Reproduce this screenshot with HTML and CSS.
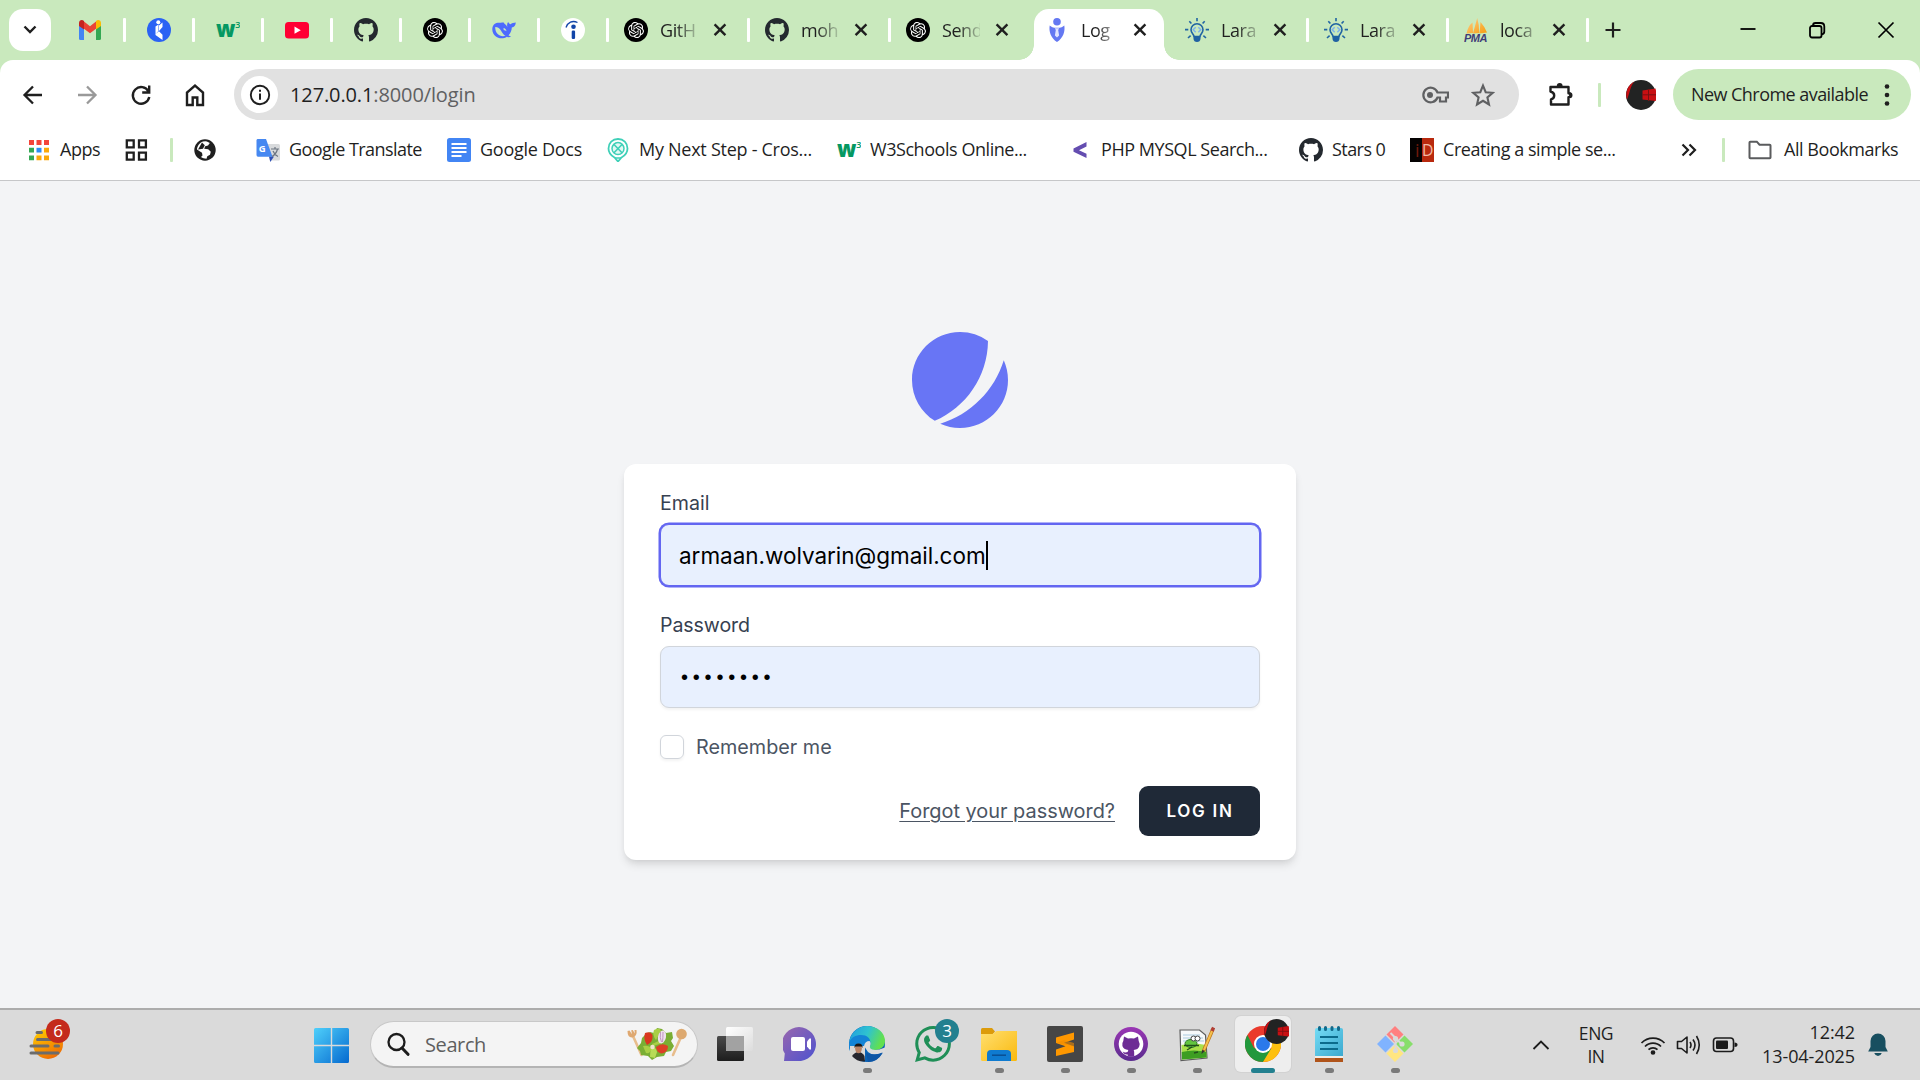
FILE: index.html
```html
<!DOCTYPE html>
<html lang="en">
<head>
<meta charset="utf-8">
<title>Log in</title>
<link rel="stylesheet" href="styles.css">
</head>
<body>
<svg class="defs" aria-hidden="true">
  <defs>
    <symbol id="github" viewBox="0 0 16 16"><path fill-rule="evenodd" d="M8 0C3.58 0 0 3.58 0 8c0 3.54 2.29 6.53 5.47 7.59.4.07.55-.17.55-.38 0-.19-.01-.82-.01-1.49-2.01.37-2.53-.49-2.69-.94-.09-.23-.48-.94-.82-1.13-.28-.15-.68-.52-.01-.53.63-.01 1.08.58 1.23.82.72 1.21 1.87.87 2.33.66.07-.52.28-.87.51-1.07-1.78-.2-3.64-.89-3.64-3.95 0-.87.31-1.59.82-2.15-.08-.2-.36-1.02.08-2.12 0 0 .67-.21 2.2.82.64-.18 1.32-.27 2-.27s1.36.09 2 .27c1.53-1.04 2.2-.82 2.2-.82.44 1.1.16 1.92.08 2.12.51.56.82 1.27.82 2.15 0 3.07-1.87 3.75-3.65 3.95.29.25.54.73.54 1.48 0 1.07-.01 1.93-.01 2.2 0 .21.15.46.55.38A8.01 8.01 0 0016 8c0-4.42-3.58-8-8-8z"/></symbol>
    <symbol id="openai" viewBox="0 0 24 24"><circle cx="12" cy="12" r="12" fill="#000"/><path transform="translate(4 4) scale(.667)" fill="#fff" d="M22.2819 9.8211a5.9847 5.9847 0 0 0-.5157-4.9108 6.0462 6.0462 0 0 0-6.5098-2.9A6.0651 6.0651 0 0 0 4.9807 4.1818a5.9847 5.9847 0 0 0-3.9977 2.9 6.0462 6.0462 0 0 0 .7427 7.0966 5.98 5.98 0 0 0 .511 4.9107 6.051 6.051 0 0 0 6.5146 2.9001A5.9847 5.9847 0 0 0 13.2599 24a6.0557 6.0557 0 0 0 5.7718-4.2058 5.9894 5.9894 0 0 0 3.9977-2.9001 6.0557 6.0557 0 0 0-.7475-7.0729zm-9.022 12.6081a4.4755 4.4755 0 0 1-2.8764-1.0408l.1419-.0804 4.7783-2.7582a.7948.7948 0 0 0 .3927-.6813v-6.7369l2.02 1.1686a.071.071 0 0 1 .038.052v5.5826a4.504 4.504 0 0 1-4.4945 4.4944zm-9.6607-4.1254a4.4708 4.4708 0 0 1-.5346-3.0137l.142.0852 4.783 2.7582a.7712.7712 0 0 0 .7806 0l5.8428-3.3685v2.3324a.0804.0804 0 0 1-.0332.0615L9.74 19.9502a4.4992 4.4992 0 0 1-6.1408-1.6464zM2.3408 7.8956a4.485 4.485 0 0 1 2.3655-1.9728V11.6a.7664.7664 0 0 0 .3879.6765l5.8144 3.3543-2.0201 1.1685a.0757.0757 0 0 1-.071 0l-4.8303-2.7865A4.504 4.504 0 0 1 2.3408 7.872zm16.5963 3.8558L13.1038 8.364 15.1192 7.2a.0757.0757 0 0 1 .071 0l4.8303 2.7913a4.4944 4.4944 0 0 1-.6765 8.1042v-5.6772a.79.79 0 0 0-.407-.667zm2.0107-3.0231l-.142-.0852-4.7735-2.7818a.7759.7759 0 0 0-.7854 0L9.409 9.2297V6.8974a.0662.0662 0 0 1 .0284-.0615l4.8303-2.7866a4.4992 4.4992 0 0 1 6.6802 4.66zM8.3065 12.863l-2.02-1.1638a.0804.0804 0 0 1-.038-.0567V6.0742a4.4992 4.4992 0 0 1 7.3757-3.4537l-.142.0805L8.704 5.459a.7948.7948 0 0 0-.3927.6813zm1.0976-2.3654l2.602-1.4998 2.6069 1.4998v2.9994l-2.5974 1.4997-2.6067-1.4997Z"/></symbol>
    <symbol id="w3" viewBox="0 0 24 24"><text x="0" y="18.500" font-family="Open Sans" font-weight="800" font-size="23" textLength="19" lengthAdjust="spacingAndGlyphs" fill="#059862">w</text><text x="19.300" y="9.800" font-family="Open Sans" font-weight="600" font-size="9" fill="#059862">3</text></symbol>
    <symbol id="close" viewBox="0 0 18 18"><path d="M3.600 3.300l10.800 10.800M14.400 3.300L3.600 14.100" stroke="#1f1f1f" stroke-width="2.400" fill="none"/></symbol>
    <symbol id="bulb" viewBox="0 0 24 24"><g fill="none" stroke="#2064a3" stroke-width="1.600"><path d="M9 18.500c0-2-3-3.300-3-6.700a6 6 0 0 1 12 0c0 3.400-3 4.700-3 6.700z"/><path d="M12 0v3.200M4.300 3.200l2.100 2.300M19.700 3.200l-2.100 2.300M0 11.600h3.300M20.700 11.600H24M3 20l2.600-2.300M21 20l-2.600-2.300"/></g><path d="M8.500 18.500h7v2.200c0 2-1.500 3.300-3.500 3.300s-3.500-1.300-3.500-3.300z" fill="#1f61a2"/><path d="M10.700 9.300l-2.500 2.500 2.500 2.500M13.300 9.300l2.500 2.500-2.500 2.500" fill="none" stroke="#7fb3ea" stroke-width="1.500"/></symbol>
    <symbol id="profile" viewBox="0 0 30 30"><circle cx="15" cy="15" r="15" fill="#222323"/><path d="M1 19.500A15 15 0 0 1 8.500 1.500C4 6 4 13 1 19.500z" fill="#c80d12"/><path d="M16.500 10.500l13-2q1.500 6 .3 12.500l-13.300-1.500z" fill="#c80f12"/><path d="M22.500 9v12M16.500 14.800H30" stroke="#7a0f12" stroke-width="1"/></symbol>
    <linearGradient id="win" x1="0" y1="0" x2="1" y2="1"><stop offset="0" stop-color="#4fd0fb"/><stop offset="1" stop-color="#0569cf"/></linearGradient>
    <linearGradient id="sun" x1=".2" y1="0" x2=".7" y2="1"><stop offset="0" stop-color="#ffcb00"/><stop offset="1" stop-color="#ee6a05"/></linearGradient>
    <linearGradient id="chat" x1="0" y1="0" x2="1" y2="1"><stop offset="0" stop-color="#9a67ad"/><stop offset="1" stop-color="#4d52cf"/></linearGradient>
    <linearGradient id="edge" x1="0" y1="0" x2="1" y2=".3"><stop offset="0" stop-color="#1f9be0"/><stop offset=".55" stop-color="#2fc3d0"/><stop offset="1" stop-color="#62e04f"/></linearGradient>
    <linearGradient id="folder" x1="0" y1="0" x2="1" y2="1"><stop offset="0" stop-color="#ffdf70"/><stop offset="1" stop-color="#fab90d"/></linearGradient>
    <linearGradient id="cat" x1="0" y1="0" x2="0" y2="1"><stop offset="0" stop-color="#9a36b4"/><stop offset="1" stop-color="#5a2c8e"/></linearGradient>
    <linearGradient id="note" x1="0" y1="0" x2="1" y2="1"><stop offset="0" stop-color="#74dcf5"/><stop offset="1" stop-color="#3ca9cf"/></linearGradient>
    <linearGradient id="pane" x1="0" y1="0" x2="0" y2="1"><stop offset="0" stop-color="#4a4a4a"/><stop offset="1" stop-color="#1d1d1d"/></linearGradient>
    <linearGradient id="glass" x1="0" y1="0" x2="1" y2="1"><stop offset="0" stop-color="#fff"/><stop offset="1" stop-color="#dcdcdc"/></linearGradient>
    <linearGradient id="sail" x1="0" y1="0" x2="1" y2="1"><stop offset="0" stop-color="#fdd08a"/><stop offset="1" stop-color="#f89c0e"/></linearGradient>
  </defs>
</svg>

<header class="tabstrip">
  <button class="tab-search"><svg width="14" height="10" viewBox="0 0 14 10"><path d="M1.500 1.500L7 7l5.500-5.500" fill="none" stroke="#1f1f1f" stroke-width="2.400"/></svg></button>
  <div class="pinned"><svg class="fav" viewBox="0 0 24 24"><path d="M1 5v15.500q0 1.500 1.500 1.500H6V9.500z" fill="#4285f4"/><path d="M23 5v15.500q0 1.500-1.500 1.500H18V9.500z" fill="#34a853"/><path d="M6 3.500l6 4.700 6-4.700v7.200l-6 4.600-6-4.600z" fill="#ea4335"/><path d="M1 8V5c0-3 3.200-3.700 5-2v8.500z" fill="#c5221f"/><path d="M23 8V5c0-3-3.200-3.700-5-2v8.500z" fill="#fbbc04"/></svg><i class="sep"></i></div>
  <div class="pinned"><svg class="fav" viewBox="0 0 24 24"><circle cx="12" cy="12" r="12" fill="#2a62f4"/><circle cx="11.300" cy="4.300" r="2" fill="#fff"/><path d="M8.500 8.500v7.500l3-3V6.500zM12 7.500l3.500-3v4.500l-3.500 4zM8.500 16l3.500-2.800 3.500 3.500V22l-7-5z" fill="#fff"/></svg><i class="sep"></i></div>
  <div class="pinned"><svg class="fav"><use href="#w3"/></svg><i class="sep"></i></div>
  <div class="pinned"><svg class="fav" viewBox="0 0 24 24"><rect y="4" width="24" height="16.500" rx="3.500" fill="#ff0033"/><path d="M9.500 8.500v7.300l6.300-3.600z" fill="#fff"/></svg><i class="sep"></i></div>
  <div class="pinned"><svg class="fav ink"><use href="#github"/></svg><i class="sep"></i></div>
  <div class="pinned"><svg class="fav"><use href="#openai"/></svg><i class="sep"></i></div>
  <div class="pinned"><svg class="fav" viewBox="0 0 24 24"><path d="M10 4.500c1.500-.3 2.500.2 2.400 1.300 1.600 1 2.300 2 3 3.400-.6-1.800-.4-3.500.7-5.200.8 1.400 1.500 2 2.700 2.200 1.300-1.500 3-1.300 5-1.700-.2 3-1.600 4.700-4 5-.1 3.200-1.300 5.800-3.300 7.800.7.700 1.500 1 2.600 1.100-1.300 1-2.700 1.100-4.200.3C9.500 22.500.5 19.500.3 11.500.3 7.500 2.500 5 5.500 4.700c1.600-.1 3 .1 4.500-.2z" fill="#4d6bfe"/><path d="M3.200 9c3 0 4.500 1.500 6 4 1.300 2.200 2.300 3.800 4.300 4.800C8.500 19.500 3 16 3.200 9zM11.500 10c1.500.2 2.800 1.400 3 3.200-.8-.8-2-.7-2.800-1.300z" fill="#c9e9bd"/></svg><i class="sep"></i></div>
  <div class="pinned"><svg class="fav" viewBox="0 0 24 24"><circle cx="12" cy="12" r="12" fill="#fff"/><circle cx="12.500" cy="8.700" r="2.300" fill="#1245a8"/><rect x="10.700" y="12.500" width="3.400" height="8.500" rx="1.200" fill="#1245a8"/><path d="M5 9.500C6.500 4.500 11.500 2 16.500 4.500" fill="none" stroke="#1245a8" stroke-width="1.300"/></svg><i class="sep"></i></div>

  <div class="tab"><svg class="fav"><use href="#openai"/></svg><span class="title">GitH</span><svg class="x"><use href="#close"/></svg><i class="sep"></i></div>
  <div class="tab"><svg class="fav ink"><use href="#github"/></svg><span class="title">moh</span><svg class="x"><use href="#close"/></svg><i class="sep"></i></div>
  <div class="tab before-active"><svg class="fav"><use href="#openai"/></svg><span class="title">Send</span><svg class="x"><use href="#close"/></svg></div>
  <div class="tab active"><svg class="fav" viewBox="0 0 24 24"><circle cx="12" cy="3.800" r="3.800" fill="#6478f2"/><path d="M4.700 7.500c2 1.500 3.500 2.200 4.500 2.300h5.600c1-.1 2.500-.8 4.500-2.300 1 6-1 12.500-7.300 16.500C5.700 20 3.700 13.500 4.700 7.500z" fill="#6478f2"/><path d="M9.800 10.300h4.400l-1 1.700.9 5.500-2.100 2-2.100-2 .9-5.500z" fill="#dfe3ff"/></svg><span class="title">Log</span><svg class="x"><use href="#close"/></svg></div>
  <div class="tab after-active"><svg class="fav"><use href="#bulb"/></svg><span class="title">Lara</span><svg class="x"><use href="#close"/></svg><i class="sep"></i></div>
  <div class="tab narrow"><svg class="fav"><use href="#bulb"/></svg><span class="title">Lara</span><svg class="x"><use href="#close"/></svg><i class="sep"></i></div>
  <div class="tab narrow"><svg class="fav" viewBox="0 0 24 24"><path d="M2.500 15.500Q4 8 8.500 4.500L9 15zM9 15.500L13.200 0q2.200 7 2 15zM15.500 15.500L16.500 4q4.500 5 6.500 10.500z" fill="url(#sail)"/><text x="0" y="23.500" font-family="Liberation Sans" font-weight="700" font-style="italic" font-size="10" textLength="23" lengthAdjust="spacingAndGlyphs" fill="#3f3d77">PMA</text></svg><span class="title">loca</span><svg class="x"><use href="#close"/></svg><i class="sep"></i></div>
  <button class="new-tab"><svg width="18" height="18" viewBox="0 0 18 18"><path d="M9 1.500v15M1.500 9h15" stroke="#1f1f1f" stroke-width="2.200"/></svg></button>
  <div class="window-controls">
    <span><svg width="18" height="18" viewBox="0 0 18 18"><path d="M1.500 8h15" stroke="#000" stroke-width="1.800"/></svg></span>
    <span><svg width="18" height="18" viewBox="0 0 18 18" fill="none" stroke="#000" stroke-width="1.800"><rect x="2" y="5" width="11.500" height="11.500" rx="2"/><path d="M5 4.500C5 2.800 6 2 7.500 2h5.300C15 2 16.300 3.300 16.300 5.500v5c0 1.500-.8 2.600-2.300 2.800"/></svg></span>
    <span><svg width="18" height="18" viewBox="0 0 18 18"><path d="M1.500 1.500l15 15M16.500 1.500l-15 15" stroke="#000" stroke-width="1.700"/></svg></span>
  </div>
</header>

<section class="chrome">
  <nav class="toolbar">
    <span class="nav"><svg width="24" height="24" viewBox="0 0 24 24" fill="none" stroke="#1f1f1f" stroke-width="2.300"><path d="M21 12H4M12 3.500L3.500 12l8.500 8.500"/></svg></span>
    <span class="nav"><svg width="24" height="24" viewBox="0 0 24 24" fill="none" stroke="#999" stroke-width="2.300"><path d="M3 12h17M12 3.500l8.500 8.500-8.500 8.500"/></svg></span>
    <span class="nav"><svg width="24" height="24" viewBox="0 0 24 24" fill="none" stroke="#1f1f1f" stroke-width="2.400"><path d="M19.500 8.500A8.300 8.300 0 1 0 20.300 14M20.200 2.500v7h-7"/></svg></span>
    <span class="nav"><svg width="24" height="24" viewBox="0 0 24 24" fill="none" stroke="#1f1f1f" stroke-width="2.400"><path d="M4 22V9.500L12 2.500l8 7V22h-5.700v-7.500H9.700V22z"/></svg></span>
    <div class="omnibox">
      <span class="site-info"><svg width="22" height="22" viewBox="0 0 22 22"><circle cx="11" cy="11" r="9.200" fill="none" stroke="#1f1f1f" stroke-width="1.900"/><path d="M11 9.500v6.300M11 5.800v2" stroke="#1f1f1f" stroke-width="2"/></svg></span>
      <span class="url">127.0.0.1<em>:8000/login</em></span>
      <svg class="key" width="28" height="18" viewBox="0 0 28 18"><path d="M16.500 6.500A7.300 7.300 0 1 0 16.500 11.500H19v4h6v-4h2v-5z" fill="none" stroke="#5f6062" stroke-width="2.200"/><circle cx="9" cy="9" r="3" fill="#5f6062"/></svg>
      <svg class="star" width="24" height="24" viewBox="0 0 24 24"><path d="M12 2.600l2.700 6.600 7.100.6-5.400 4.700 1.600 7L12 17.800l-6 3.700 1.600-7-5.400-4.700 7.100-.6z" fill="none" stroke="#5f6062" stroke-width="2.100"/></svg>
    </div>
    <svg class="puzzle" width="26" height="26" viewBox="0 0 26 26"><path d="M2.500 6h18v6.200a2 2 0 0 1 0 4V23.500H3v-5q3.200-1 3.200-4t-3.700-4z" fill="none" stroke="#1f1f1f" stroke-width="2.400" stroke-linejoin="round"/><path d="M8.800 5a2.900 2.900 0 0 1 5.800 0zM21.500 11.200a3 3 0 0 1 0 6z" fill="#1f1f1f"/></svg>
    <i class="vsep"></i>
    <svg class="avatar"><use href="#profile"/></svg>
    <button class="update"><span>New Chrome available</span><svg width="6" height="22" viewBox="0 0 6 22" fill="#1f1f1f"><circle cx="3" cy="2.500" r="2.300"/><circle cx="3" cy="11" r="2.300"/><circle cx="3" cy="19.500" r="2.300"/></svg></button>
  </nav>
  <nav class="bookmarks">
    <span class="bm"><svg class="fav" viewBox="0 0 24 24"><path d="M2 2h5v5H2zM9.500 2h5v5h-5zM17 2h5v5h-5z" fill="#f4453a"/><path d="M2 9.800h5v4.700H2zM2 17.500h5v4.700H2z" fill="#34a853"/><path d="M9.500 9.800h5v4.700h-5z" fill="#2b8df5"/><path d="M17 9.800h5v4.700h-5zM9.500 17.500h5v4.700h-5zM17 17.500h5v4.700h-5z" fill="#fba90a"/></svg><span>Apps</span></span>
    <span class="bm"><svg class="fav" viewBox="0 0 24 24" fill="none" stroke="#1f1f1f" stroke-width="2.300"><path d="M2.800 2.400h6.900v6.900H2.800zM15 2.400h6.900v6.900H15zM2.800 14.700h6.900v6.900H2.800zM15 14.700h6.900v6.900H15z"/></svg></span>
    <i class="vsep"></i>
    <span class="bm"><svg class="fav" viewBox="0 0 24 24"><circle cx="12" cy="12" r="10.700" fill="#1f1f1f"/><path d="M12.500 3.200c2 .3 3 .8 4.300 1.800L15 7.500l-2.800.8-1 2.500 4 .5 2.600 2.500-.8 3-2.700 1.500-.8 2.400c-2 0-4-.5-5.500-1.700l1.500-1.500-.5-2.700L4 11.500c0-3 2.500-7 6-8z" fill="#fff"/><path d="M9 4.500l2.800 2.800-1.800 3.500-5 .7z" fill="#1f1f1f"/></svg></span>
    <span class="bm"><svg class="fav" viewBox="0 0 24 24"><path d="M11 6h11.500q1.500 0 1.500 1.500V21q0 1.500-1.500 1.500H14z" fill="#d8dadc"/><path d="M13 18.500h5L14.300 24z" fill="#2f50b5"/><path d="M1.500 1H10l6.500 17.700H2Q.5 18.700.5 17V2.500Q.5 1 1.500 1z" fill="#4688f1"/><text x="2.700" y="13.500" font-family="Open Sans" font-weight="700" font-size="9.500" fill="#fff">G</text><path d="M15 11h8M19 9v2M21.500 11c-.7 3-3 6-5.500 7.500M17 13c1 2.500 3 4.500 5 5.500" stroke="#6b7480" stroke-width="1.200" fill="none"/></svg><span class="tight">Google Translate</span></span>
    <span class="bm"><svg class="fav" viewBox="0 0 24 24"><rect width="24" height="24" rx="2.500" fill="#4285f4"/><path d="M4.500 6h15M4.500 10h15M4.500 14h15M4.500 18h10" stroke="#fff" stroke-width="2"/></svg><span class="loose">Google Docs</span></span>
    <span class="bm"><svg class="fav" viewBox="0 0 24 24"><path d="M12 1c5.500 0 9.500 4 9.500 9.500 0 4.500-3 7.300-6 9L12 23.500l-3.500-4c-3-1.700-6-4.500-6-9C2.500 5 6.500 1 12 1z" fill="none" stroke="#3fd0b8" stroke-width="1.800"/><circle cx="12" cy="10.600" r="6" fill="#e3f8f4" stroke="#3fd0b8" stroke-width="1.500"/><path d="M8 6.500l8 8.200M16 6.500l-8 8.200M9 20h6" stroke="#3fd0b8" stroke-width="1.600"/></svg><span class="loose">My Next Step - Cros...</span></span>
    <span class="bm"><svg class="fav"><use href="#w3"/></svg><span>W3Schools Online...</span></span>
    <span class="bm"><svg class="fav" viewBox="0 0 24 24"><path d="M18.500 4v4.500L11 12.200l7.500 3.500V20L5.500 13.800v-3.200z" fill="#644db0"/></svg><span>PHP MYSQL Search...</span></span>
    <span class="bm"><svg class="fav ink"><use href="#github"/></svg><span class="tight">Stars 0</span></span>
    <span class="bm"><svg class="fav" viewBox="0 0 24 24"><path d="M0 0h12v24H0z" fill="#050202"/><path d="M12 0h12v24H12z" fill="#b8290e"/><text x="5" y="19" font-family="Open Sans" font-size="18" fill="#6e1a0c">i</text><text x="12" y="18" font-family="Open Sans" font-size="16" textLength="11" lengthAdjust="spacingAndGlyphs" fill="#f0b9a5">D</text></svg><span>Creating a simple se...</span></span>
    <span class="bm"><svg class="fav" viewBox="0 0 24 24"><path d="M5.500 6.500L11 12l-5.500 5.500M12.500 6.500L18 12l-5.500 5.500" fill="none" stroke="#1f1f1f" stroke-width="2.200"/></svg></span>
    <i class="vsep"></i>
    <span class="bm folder"><svg class="fav" viewBox="0 0 24 24"><path d="M1.500 4.500q0-.8.800-.8h6.500l2.700 3h10.200q.8 0 .8.800v12q0 .8-.8.800H2.300q-.8 0-.8-.8z" fill="none" stroke="#5a5b5d" stroke-width="2"/></svg><span>All Bookmarks</span></span>
  </nav>
</section>

<main class="page">
  <svg class="logo" viewBox="0 0 48 48" fill="#6875f5"><path d="M11.395 44.428C4.557 40.198 0 32.632 0 24 0 10.745 10.745 0 24 0a23.891 23.891 0 0113.997 4.502c-.2 17.907-11.097 33.245-26.602 39.926z"/><path d="M14.134 45.885A23.914 23.914 0 0024 48c13.255 0 24-10.745 24-24 0-3.516-.756-6.856-2.115-9.866-4.659 15.143-16.608 27.092-31.75 31.751z"/></svg>
  <form class="card">
    <label class="label">Email</label>
    <div class="field focused"><span class="value">armaan.wolvarin@gmail.com</span><i class="caret"></i></div>
    <label class="label second">Password</label>
    <div class="field"><span class="dots">••••••••</span></div>
    <div class="remember"><i class="checkbox"></i><span>Remember me</span></div>
    <div class="actions"><a class="forgot">Forgot your password?</a><button type="button" class="login">LOG IN</button></div>
  </form>
</main>

<footer class="taskbar">
  <div class="widget"><svg width="38" height="34" viewBox="0 0 38 34"><circle cx="19" cy="16" r="15" fill="url(#sun)"/><path d="M8 4.500h4.500M8.500 11.500h26M2 18h17M26 18h3.500M2 25h27" stroke="#6c6c6c" stroke-width="3" stroke-linecap="round"/></svg><b class="badge red">6</b></div>
  <svg class="start" viewBox="0 0 35 35" fill="url(#win)"><path d="M0 1.500Q0 0 1.500 0H16.800V16.800H0zM18.200 0H33.500Q35 0 35 1.500V16.800H18.200zM0 18.200H16.800V35H1.500Q0 35 0 33.500zM18.200 18.200H35V33.500Q35 35 33.500 35H18.200z"/></svg>
  <div class="search"><svg width="24" height="24" viewBox="0 0 24 24"><circle cx="10.500" cy="10" r="8" fill="none" stroke="#1c1c1c" stroke-width="2.300"/><path d="M16 16l6 6.300" stroke="#1c1c1c" stroke-width="3" stroke-linecap="round"/></svg><span>Search</span>
    <svg class="salad" width="62" height="34" viewBox="0 0 62 34"><path d="M7 9l8.500 19" stroke="#e8bd8c" stroke-width="2.600" stroke-linecap="round"/><path d="M1.500 4q0 7 5 6.500 5-1.500 4-7.500L8.500 3l.3 3.500-2-3.500-1.600.3.800 4L3.500 3.500z" fill="#dfa870"/><path d="M55 10l-8 18" stroke="#e8bd8c" stroke-width="2.600" stroke-linecap="round"/><circle cx="55.500" cy="7" r="5.300" fill="#dda970"/><path d="M20 7l4-2 4 1 3-5 5 1 4 4 6-1 1 6-2 3 3 5-3 5-5 1-2 4-7 1-5 3-4-4-7-1-1-4-3-3 4-5 1-5z" fill="#7aae34"/><path d="M19 6q6-2 7.500 2 1 7-5.500 10-4-6-2-12z" fill="#d9371f"/><path d="M30 20q6-5 12-1 0 7-6.500 7.500-5-1-5.500-6.500z" fill="#dd3f26"/><path d="M28 3q6-3 7 1l-5 9q-4-5-2-10zM17 19q6-1 9 3-2 5-6 4zM26 17l9-4 3 2.500-11 3.500z" fill="#a9cf45"/><ellipse cx="36" cy="10" rx="4" ry="6.500" fill="#efe0ee" transform="rotate(12 36 10)"/><path d="M34.500 5q-1 6 1 10M37 5q0 6-.5 10" stroke="#b582b4" stroke-width=".8" fill="none"/><path d="M26 20q4 0 5 5l-2 6-5-1q0-6 2-10z" fill="#b7dc57"/><circle cx="26.500" cy="20" r="2.300" fill="#f1e6cf"/></svg></div>
  <div class="apps-row">
    <span class="app"><svg width="36" height="36" viewBox="0 0 36 36"><rect x="0" y="10" width="27" height="25" rx="1.500" fill="url(#pane)"/><rect x="9" y="1" width="27" height="24" rx="1.500" fill="url(#glass)"/><path d="M9 10h18v15H9z" fill="#a2a2a2"/></svg></span>
    <span class="app"><svg width="36" height="36" viewBox="0 0 36 36"><path d="M1 35l.8-7.500A17 17 0 1 1 18 35z" fill="url(#chat)"/><rect x="8" y="11" width="14" height="14" rx="2" fill="#fff"/><path d="M24 15.500l2.500-3h1.500v11h-1.500L24 20.500z" fill="#fff"/></svg></span>
    <span class="app running"><svg width="36" height="36" viewBox="0 0 36 36"><circle cx="18" cy="18" r="18" fill="#0c62b4"/><path d="M0 17C1 7 9 0 18 0c10 0 18 6.500 18 15 0 6-5 9-10 9-5 0-6-2-5-4 1-2 1-9-8-9C7 11 1 14 0 17z" fill="url(#edge)"/><path d="M0 17C2 11 7 9 12 9c8 0 11 6 8.500 10.500C14 17 11 24 15 30L5 31Q-1 25 0 17z" fill="#1484d6"/><path d="M15 20q1-5 5.500-5 2 2 .5 5-1 3.500 5 4 4 0 10-2.500v4.500q-11 5-17 0z" fill="#dcdcdc"/><path d="M17 27q8 3 16.500-.500Q29 36 19 36z" fill="#0d56a6"/><path d="M1 20h15v14H8L1 29z" fill="#dbd8d6"/><path d="M3 30q3-4 6.500-4t6 4l.5 5.500Q8 36 3 30z" fill="#26262e"/><ellipse cx="9.500" cy="22.500" rx="3.400" ry="4.800" fill="#b88366"/><path d="M5.500 22q-.5-4.500 4-4.500t4 4.500l-1-1.500H6.500z" fill="#1c1817"/></svg></span>
    <span class="app"><svg width="36" height="36" viewBox="0 0 24 24" fill="#1f8f57"><path d="M17.472 14.382c-.297-.149-1.758-.867-2.030-.967-.273-.099-.471-.148-.670.150-.197.297-.767.966-.940 1.164-.173.199-.347.223-.644.075-.297-.150-1.255-.463-2.390-1.475-.883-.788-1.480-1.761-1.653-2.059-.173-.297-.018-.458.130-.606.134-.133.298-.347.446-.520.149-.174.198-.298.298-.497.099-.198.050-.371-.025-.520-.075-.149-.669-1.612-.916-2.207-.242-.579-.487-.500-.669-.510-.173-.008-.371-.010-.570-.010-.198 0-.520.074-.792.372-.272.297-1.040 1.016-1.040 2.479 0 1.462 1.065 2.875 1.213 3.074.149.198 2.096 3.200 5.077 4.487.709.306 1.262.489 1.694.625.712.227 1.360.195 1.871.118.571-.085 1.758-.719 2.006-1.413.248-.694.248-1.289.173-1.413-.074-.124-.272-.198-.570-.347m-5.421 7.403h-.004a9.870 9.870 0 0 1-5.031-1.378l-.361-.214-3.741.982.998-3.648-.235-.374a9.860 9.860 0 0 1-1.510-5.260c.001-5.450 4.436-9.884 9.888-9.884 2.640 0 5.122 1.030 6.988 2.898a9.825 9.825 0 0 1 2.893 6.994c-.003 5.450-4.437 9.884-9.885 9.884m8.413-18.297A11.815 11.815 0 0 0 12.050 0C5.495 0 .160 5.335.157 11.892c0 2.096.547 4.142 1.588 5.945L.057 24l6.305-1.654a11.882 11.882 0 0 0 5.683 1.448h.005c6.554 0 11.890-5.335 11.893-11.893a11.821 11.821 0 0 0-3.480-8.413z"/></svg><b class="badge teal">3</b></span>
    <span class="app running"><svg width="36" height="36" viewBox="0 0 36 36"><path d="M0 3.500Q0 2 1.500 2H11l3 3.500L11 9H0z" fill="#dc9b0b"/><path d="M0 8h11.500l4-3H36v28.500q0 1.500-1.500 1.500h-33Q0 35 0 33.500z" fill="url(#folder)"/><path d="M6 35v-7q0-4 4-4h16q4 0 4 4v7z" fill="#0f7bd0"/><path d="M11 29.200h14" stroke="#0a4f92" stroke-width="1.500"/></svg></span>
    <span class="app running"><svg width="36" height="36" viewBox="0 0 36 36"><rect width="36" height="36" rx="2" fill="#464646"/><path d="M27 6.500v7l-10 3.300 10 3.400V26L9 30v-6.500l9.500-3.300L9 17v-5.500z" fill="#ff9800"/><path d="M9 17l18 3.200V17L17 14z" fill="#ee8a00" opacity=".6"/></svg></span>
    <span class="app running"><svg width="36" height="36" viewBox="0 0 36 36"><circle cx="18" cy="18" r="17" fill="url(#cat)"/><circle cx="18" cy="18" r="12.300" fill="#fff"/><path d="M11 10.500l4 2q3-.7 6 0l4-2 .7 4.500q1.500 2.500.5 5.500-1 3-5.500 3.500.5 1 .5 2.500v4h-6.500v-2q-4 .5-5-3 2 1.500 5 .5 0-1.200.7-2-5-.5-6-4-.6-3 .9-5z" fill="#6d2d95"/></svg></span>
    <span class="app running"><svg width="36" height="36" viewBox="0 0 36 36"><path d="M1 4h19.500l6 5L28 32 2 34.500z" fill="#f7f9fa" stroke="#5c5c5c" stroke-width="1.200"/><path d="M4 9h17M4 12h20M4 15h21" stroke="#a9cbe0"/><path d="M2.500 19q12-3 24.300 0l.7 12.500L3 33.500z" fill="#a9e04a"/><path d="M2.800 26q12-3 24.400 0l.5 5.500L3 33.500z" fill="#3d9e22"/><ellipse cx="12" cy="17.500" rx="6" ry="4" fill="#62c540" stroke="#2f7a26" stroke-width="1"/><circle cx="14.500" cy="12.500" r="2.500" fill="#fff" stroke="#444"/><circle cx="18.500" cy="12.500" r="2.500" fill="#fff" stroke="#444"/><path d="M5 19.500h15M8 24l5-3M15 27l4-1" stroke="#234f1b" stroke-width="1.300"/><path d="M34 3L24.500 25" stroke="#b9751d" stroke-width="3.400"/><path d="M33.500 4L25 24" stroke="#f6c04c" stroke-width="2"/><path d="M34.600 1.500L33 5" stroke="#b13e34" stroke-width="3.400"/><path d="M23 24l3 1-3.500 3z" fill="#333"/></svg></span>
    <span class="app running current"><svg width="36" height="36" viewBox="0 0 36 36"><circle cx="18" cy="18" r="18" fill="#ea3a2d"/><path d="M2.400 9A18 18 0 0 0 18 36l9-13-18-1z" fill="#22983c"/><path d="M18 36A18 18 0 0 0 33.600 9H18l8.500 13z" fill="#fdc010"/><circle cx="18" cy="18" r="9" fill="#fff"/><circle cx="18" cy="18" r="7" fill="#2a79ea"/></svg><svg class="overlay"><use href="#profile"/></svg></span>
    <span class="app running"><svg width="36" height="36" viewBox="0 0 36 36"><path d="M4 31h28v5H4z" fill="#b0541a"/><path d="M4 28h28v4H4z" fill="#f2ede6"/><path d="M4 4q0-2 2-2h24q2 0 2 2v26H4z" fill="url(#note)"/><path d="M9 11h18M9 17h18M9 23h18" stroke="#0b6b8c" stroke-width="1.800"/><path d="M8.500 1.500v2M14.500 1.500v2M21 1.500v2M27.500 1.500v2" stroke="#12698a" stroke-width="3" stroke-linecap="round"/></svg></span>
    <span class="app running"><svg width="36" height="36" viewBox="0 0 36 36"><path d="M18 0l8.500 8.500L18 17 9.500 8.500z" fill="#ff8080"/><path d="M8.500 9.500L17 18l-8.500 8.500L0 18z" fill="#80b3ff"/><path d="M27.500 9.500L36 18l-8.500 8.500L19 18z" fill="#87de6b"/><path d="M18 19l8.500 8.500L18 36l-8.500-8.500z" fill="#ffe680"/><path d="M13.500 7l5 5v12.500M18.500 12l6 6" stroke="#dadada" stroke-width="2" fill="none"/><circle cx="18.500" cy="12.500" r="2.600" fill="#dadada"/><circle cx="25" cy="18" r="2.600" fill="#dadada"/><circle cx="18.500" cy="24.500" r="2.600" fill="#dadada"/></svg></span>
  </div>
  <div class="tray">
    <svg class="up" width="18" height="12" viewBox="0 0 18 12"><path d="M1.500 10L9 2.500l7.500 7.500" fill="none" stroke="#1c1c1c" stroke-width="1.800"/></svg>
    <span class="lang">ENG<br>IN</span>
    <svg class="wifi" width="26" height="22" viewBox="0 0 26 22" fill="none" stroke="#1c1c1c" stroke-width="1.700"><path d="M1.500 9a16 16 0 0 1 23 0M5 12.500a11 11 0 0 1 16 0M8.500 15.700a6.300 6.300 0 0 1 9 0"/><circle cx="13" cy="18.500" r="1.500" fill="#1c1c1c"/></svg>
    <svg class="vol" width="26" height="22" viewBox="0 0 26 22" fill="none" stroke="#1c1c1c" stroke-width="1.600"><path d="M1.500 7.500h4L11 3v16l-5.500-4.500h-4z" stroke-linejoin="round"/><path d="M14 8q2 3 0 6M17 5.500q4 5.500 0 11M20.500 2q5.500 9 0 18"/></svg>
    <svg class="bat" width="26" height="18" viewBox="0 0 26 18"><rect x="1.500" y="2" width="20" height="13.500" rx="3" fill="none" stroke="#1c1c1c" stroke-width="1.600"/><rect x="4" y="4.500" width="12" height="8.500" rx="1" fill="#1c1c1c"/><path d="M22.500 6.500q3 .2 3 2.300t-3 2.300z" fill="#1c1c1c"/></svg>
    <span class="clock">12:42<br>13-04-2025</span>
    <svg class="bell" width="22" height="24" viewBox="0 0 22 24" fill="#184f60"><path d="M11 .5a7.500 7.500 0 0 1 7.500 7.500v6l2.300 4.500H1.200L3.500 14V8A7.500 7.500 0 0 1 11 .500zM7.200 20h7.600q-1.200 3-3.800 3t-3.800-3z"/></svg>
  </div>
</footer>
</body>
</html>
```
FILE: styles.css
```css
* { box-sizing: border-box; }
body {
  margin: 0;
  width: 1920px;
  height: 1080px;
  overflow: hidden;
  display: flex;
  flex-direction: column;
  background: #c9e9bd;
  font-family: "Open Sans", sans-serif;
  font-size: 18px;
  letter-spacing: -0.45px;
  color: #1f1f1f;
}
svg { display: block; flex: none; }
button { border: 0; padding: 0; font: inherit; letter-spacing: inherit; color: inherit; }
.defs { width: 0; height: 0; position: absolute; }
.fav { width: 24px; height: 24px; }
.ink { fill: #24292f; }

/* Tab strip */
.tabstrip { height: 60px; flex: none; display: flex; padding-left: 9px; }
.tab-search { width: 42px; height: 42px; margin: 9px 6px 0 0; border-radius: 14px; background: #fff; display: grid; place-items: center; }
.pinned, .tab { display: flex; align-items: center; height: 51px; padding-bottom: 9px; margin-top: 9px; flex: none; }
.pinned { width: 69px; padding-left: 21px; }
.tab { width: 141px; padding-left: 15px; }
.sep { width: 3px; height: 24px; background: #fff; margin-left: auto; border-radius: 1px; }
.title { width: 38px; margin-left: 12px; white-space: nowrap; -webkit-mask-image: linear-gradient(90deg, #000 40%, rgba(0,0,0,.15)); mask-image: linear-gradient(90deg, #000 40%, rgba(0,0,0,.15)); }
.x { width: 18px; height: 18px; margin-left: 13px; }
.narrow { width: 140px; }
.before-active { width: 143px; }
.after-active { width: 145px; padding-left: 21px; }
.active { width: 130px; padding-left: 11px; background: #fff; border-radius: 15px 15px 0 0; position: relative; }
.after-active .x, .narrow .x { margin-left: 12px; }
.active .x { margin-left: 12px; }
.active::before, .active::after { content: ""; position: absolute; bottom: 0; width: 15px; height: 15px; }
.active::before { right: 100%; background: radial-gradient(circle at 0 0, transparent 14.500px, #fff 15px); }
.active::after { left: 100%; background: radial-gradient(circle at 100% 0, transparent 14.500px, #fff 15px); }
.new-tab { background: none; width: 48px; height: 60px; display: grid; place-items: center; }
.window-controls { display: flex; margin-left: auto; }
.window-controls span { width: 69px; height: 59px; display: grid; place-items: center; }

/* Toolbar */
.chrome { flex: none; height: 121px; background: #fff; border-radius: 13px 13px 0 0; border-bottom: 1px solid #c6c7c9; }
.toolbar { height: 60px; padding: 9px 9px 0 6px; display: flex; align-items: center; }
.nav { width: 54px; display: grid; place-items: center; }
.omnibox { width: 1285px; height: 51px; margin-left: 12px; border-radius: 26px; background: #e1e1e1; display: flex; align-items: center; padding-left: 7px; }
.site-info { width: 37px; height: 37px; border-radius: 50%; background: #fff; display: grid; place-items: center; }
.url { margin-left: 12px; font-size: 20px; letter-spacing: -0.12px; }
.url em { font-style: normal; color: #5f6062; }
.key { margin-left: auto; }
.star { margin: 0 24px 0 22px; }
.puzzle { margin: -2px 24px 0 29px; }
.vsep { width: 3px; height: 24px; background: #c9e9bd; border-radius: 1px; }
.avatar { width: 30px; height: 30px; margin-left: 25px; }
.update { margin-left: auto; width: 238px; height: 51px; border-radius: 26px; background: #c9e9bd; display: flex; align-items: center; padding-left: 18px; letter-spacing: -0.55px; white-space: nowrap; }
.update span { padding-bottom: 1px; }
.update svg { margin-left: auto; margin-right: 21px; }

/* Bookmarks bar */
.bookmarks { height: 60px; padding: 0 22px 0 27px; display: grid; grid-template-columns: 97px 46px 23px 63px 191px 159px 231px 231px 231px 111px 267px 45px 26px 1fr; align-items: center; }
.bm { display: flex; align-items: center; gap: 9px; white-space: nowrap; }
.bm span { padding-bottom: 2px; }
.folder { gap: 12px; }
.tight { letter-spacing: -0.56px; }
.loose { letter-spacing: -0.27px; }

/* Login page */
.page { flex: none; height: 827px; background: #f3f4f6; padding-top: 151px; display: flex; flex-direction: column; align-items: center; font-family: Inter, sans-serif; font-size: 19.600px; letter-spacing: 0; }
.logo { width: 96px; height: 96px; }
.card { width: 672px; height: 396px; margin-top: 36px; padding: 24px 36px; background: #fff; border-radius: 12px; box-shadow: 0 6px 9px -1.500px rgba(0,0,0,.1), 0 3px 6px -3px rgba(0,0,0,.1); }
.label { display: block; line-height: 30px; color: #374151; }
.second { margin-top: 24px; letter-spacing: -0.1px; }
.field { height: 62px; margin-top: 6px; padding-left: 18px; border: 1px solid #d1d5db; border-radius: 9px; background: #e8f0fe; display: flex; align-items: center; color: #000; font-size: 22.500px; box-shadow: 0 1.500px 3px rgba(0,0,0,.05); }
.value { width: 307px; letter-spacing: -0.03px; white-space: nowrap; }
.focused { border-color: #6366f1; box-shadow: 0 0 0 1.500px #6366f1; }
.caret { width: 2px; height: 29px; background: #000; }
.dots { font-family: "Liberation Sans", sans-serif; font-size: 20px; letter-spacing: 4.800px; margin-left: 2px; padding-top: 1px; }
.remember { height: 30px; margin-top: 24px; display: flex; align-items: center; gap: 12px; color: #4b5563; font-size: 19.800px; }
.checkbox { width: 24px; height: 24px; border: 1px solid #d1d5db; border-radius: 6px; box-shadow: 0 1.500px 3px rgba(0,0,0,.05); }
.actions { margin-top: 24px; display: flex; justify-content: flex-end; align-items: center; gap: 24px; }
.forgot { color: #4b5563; text-decoration: underline; text-underline-offset: 3px; font-size: 19.900px; }
.login { width: 121px; height: 50px; border-radius: 9px; background: #1f2937; color: #fff; font-weight: 600; font-size: 17px; letter-spacing: 1.700px; padding-left: 1px; }

/* Taskbar */
.taskbar { flex: none; height: 72px; border-top: 2px solid #acacac; background: #dadada; display: flex; align-items: center; }
.widget { position: relative; width: 38px; margin-left: 29px; }
.badge { position: absolute; width: 24px; height: 24px; border-radius: 50%; color: #fff; font-weight: 400; font-size: 17px; line-height: 23px; text-align: center; letter-spacing: 0; }
.red { background: #c42b1c; left: 17px; top: -9px; }
.teal { background: #23808f; left: 35px; top: 9px; }
.start { width: 35px; height: 35px; margin-left: 247px; }
.search { width: 328px; height: 47px; margin-left: 21px; margin-top: -2px; border-radius: 24px; background: #f4f4f4; border: 1px solid #c8c8c8; border-bottom: 2px solid #b4b4b4; display: flex; align-items: center; padding-left: 15px; font-size: 20px; letter-spacing: -0.4px; color: #5f5f5f; }
.search span { margin-left: 15px; padding-top: 1px; }
.salad { margin-left: auto; margin-right: 9px; }
.apps-row { display: flex; margin-left: 4px; }
.app { width: 66px; height: 70px; display: grid; place-items: center; position: relative; }
.app > svg { position: relative; top: -1px; }
.running::after { content: ""; position: absolute; left: 29px; top: 58px; width: 9px; height: 5px; border-radius: 3px; background: #7a7a7a; }
.current::before { content: ""; position: absolute; left: 5px; top: 6px; width: 56px; height: 56px; border-radius: 6px; background: #eee; box-shadow: 0 0 0 1px #d2d2d2; }
.current::after { left: 21px; width: 24px; background: #23808f; }
.app > .overlay { position: absolute; width: 25px; height: 25px; left: 34px; top: 9px; }
.tray { display: flex; align-items: center; margin-left: auto; padding-right: 31px; }
.lang { width: 40px; margin-left: 26px; text-align: center; line-height: 23px; font-size: 17.500px; }
.wifi { margin-left: 24px; }
.vol { margin-left: 10px; }
.bat { margin-left: 10px; }
.clock { margin-left: 20px; width: 97px; text-align: right; line-height: 24px; font-size: 18px; letter-spacing: -0.1px; padding-bottom: 2px; }
.bell { margin-left: 12px; }
```
